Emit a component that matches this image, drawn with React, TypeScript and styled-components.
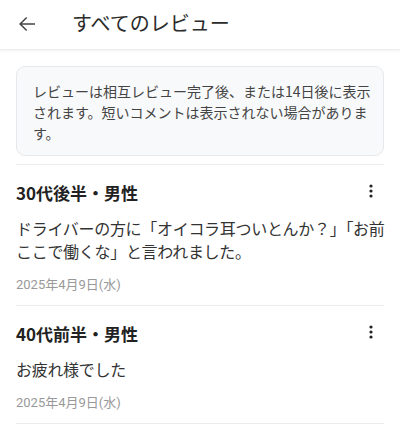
import React from "react";
import styled, { createGlobalStyle } from "styled-components";

const Global = createGlobalStyle`
  html, body { margin: 0; padding: 0; background: #fff; }
  body {
    font-family: "Noto Sans CJK JP", "Noto Sans", Roboto, sans-serif;
    color: #333;
    -webkit-font-smoothing: antialiased;
  }
  * { box-sizing: border-box; }
`;

const Page = styled.div`
  width: 400px;
  min-height: 425px;
  background: #fff;
`;

const Header = styled.header`
  height: 50px;
  display: flex;
  align-items: center;
  padding-left: 15px;
  border-bottom: 1px solid #ececec;
  box-shadow: 0 1px 3px rgba(0, 0, 0, 0.06);
`;

const BackButton = styled.button`
  width: 24px;
  height: 24px;
  padding: 0;
  border: none;
  background: none;
  display: flex;
  align-items: center;
  justify-content: center;
  color: #444;
  margin-top: -2px;
`;

const Title = styled.h1`
  margin: 0 0 0 33px;
  font-size: 20px;
  font-weight: 400;
  color: #2b2b2b;
  line-height: 28px;
  margin-top: -4px;
`;

const Content = styled.main`
  padding: 16px 16px 0;
`;

const Notice = styled.div`
  background: #f8f9fa;
  border: 1px solid #e6e8eb;
  border-radius: 9px;
  padding: 14px 8px 11px 16px;
  font-size: 14px;
  line-height: 21px;
  color: #444;
`;

const List = styled.div`
  margin-top: 8px;
  border-top: 1px solid #ececec;
`;

const Review = styled.article`
  padding: 16px 0 10px;
  border-bottom: 1px solid #ececec;
`;

const ReviewHead = styled.div`
  display: flex;
  align-items: center;
  justify-content: space-between;
`;

const Author = styled.h2`
  margin: 0;
  font-size: 17px;
  font-weight: 700;
  line-height: 24px;
  color: #222;
`;

const MoreButton = styled.button`
  width: 20px;
  height: 20px;
  padding: 0;
  border: none;
  background: none;
  display: flex;
  align-items: center;
  justify-content: center;
  color: #222;
  margin-right: 3px;
  margin-top: -4px;
`;

const Body = styled.p`
  margin: 12px -16px 0 0;
  font-size: 16px;
  line-height: 23px;
  letter-spacing: -0.3px;
  color: #333;
`;

const DateText = styled.div`
  margin-top: 12px;
  font-size: 13px;
  line-height: 20px;
  color: #999;
  font-family: Roboto, "Noto Sans CJK JP", sans-serif;
`;

const ArrowBack = () => (
  <svg width="24" height="24" viewBox="0 0 24 24" fill="currentColor">
    <path d="M20 11.25H6.9l5.3-5.3L11.15 4.9 4.05 12l7.1 7.1 1.05-1.05-5.3-5.3H20v-1.5z" />
  </svg>
);

const MoreVert = () => (
  <svg width="20" height="20" viewBox="0 0 20 20" fill="currentColor">
    <circle cx="10" cy="5" r="1.6" />
    <circle cx="10" cy="10" r="1.6" />
    <circle cx="10" cy="15" r="1.6" />
  </svg>
);

const reviews = [
  {
    author: "30代後半・男性",
    body: "ドライバーの方に「オイコラ耳ついとんか？」「お前ここで働くな」と言われました。",
    date: "2025年4月9日(水)",
  },
  {
    author: "40代前半・男性",
    body: "お疲れ様でした",
    date: "2025年4月9日(水)",
  },
];

export default function App() {
  return (
    <Page>
      <Global />
      <Header>
        <BackButton aria-label="戻る">
          <ArrowBack />
        </BackButton>
        <Title>すべてのレビュー</Title>
      </Header>
      <Content>
        <Notice>
          レビューは相互レビュー完了後、または14日後に表示されます。短いコメントは表示されない場合があります。
        </Notice>
        <List>
          {reviews.map((r, i) => (
            <Review key={i}>
              <ReviewHead>
                <Author>{r.author}</Author>
                <MoreButton aria-label="メニュー">
                  <MoreVert />
                </MoreButton>
              </ReviewHead>
              <Body>{r.body}</Body>
              <DateText>{r.date}</DateText>
            </Review>
          ))}
        </List>
      </Content>
    </Page>
  );
}
